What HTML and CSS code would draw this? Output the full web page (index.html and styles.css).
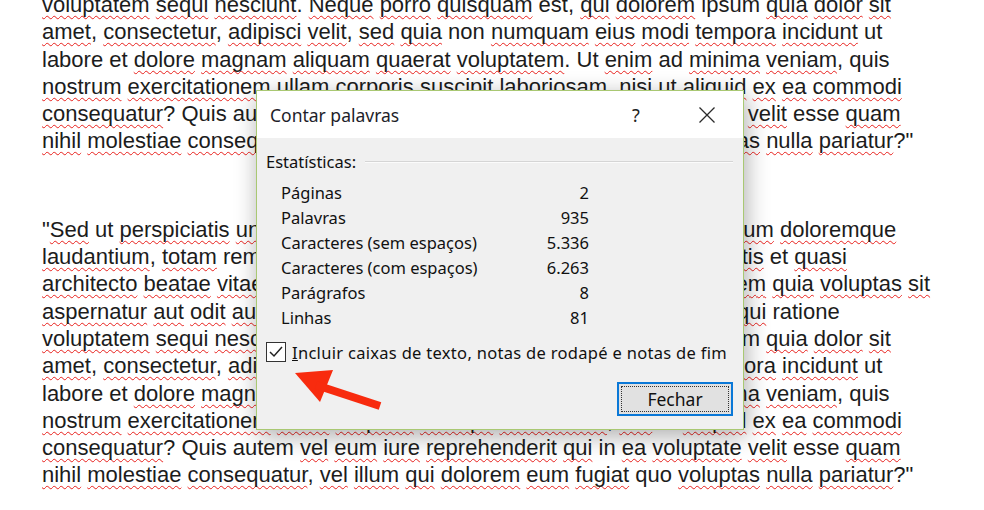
FILE: index.html
```html
<!DOCTYPE html>
<html lang="pt">
<head>
<meta charset="utf-8">
<title>Contar palavras</title>
<link rel="stylesheet" href="styles.css">
</head>
<body>
<div class="doc">
  <p class="para">
    <span class="ln"><span class="w">voluptatem</span> <span class="w">sequi</span> <span class="w">nesciunt</span>. <span class="w">Neque</span> <span class="w">porro</span> <span class="w">quisquam</span> est, <span class="w">qui</span> <span class="w">dolorem</span> ipsum <span class="w">quia</span> <span class="w">dolor</span> <span class="w">sit</span></span>
    <span class="ln"><span class="w">amet</span>, <span class="w">consectetur</span>, <span class="w">adipisci</span> <span class="w">velit</span>, <span class="w">sed</span> <span class="w">quia</span> non <span class="w">numquam</span> <span class="w">eius</span> <span class="w">modi</span> <span class="w">tempora</span> <span class="w">incidunt</span> ut</span>
    <span class="ln">labore et <span class="w">dolore</span> <span class="w">magnam</span> <span class="w">aliquam</span> <span class="w">quaerat</span> <span class="w">voluptatem</span>. Ut <span class="w">enim</span> ad <span class="w">minima</span> <span class="w">veniam</span>, quis</span>
    <span class="ln"><span class="w">nostrum</span> <span class="w">exercitationem</span> <span class="w">ullam</span> <span class="w">corporis</span> <span class="w">suscipit</span> <span class="w">laboriosam</span>, <span class="w">nisi</span> ut <span class="w">aliquid</span> <span class="w">ex</span> <span class="w">ea</span> <span class="w">commodi</span></span>
    <span class="ln"><span class="w">consequatur</span>? Quis autem <span class="w">vel</span> <span class="w">eum</span> <span class="w">iure</span> <span class="w">reprehenderit</span> <span class="w">qui</span> in <span class="w">ea</span> <span class="w">voluptate</span> <span class="w">velit</span> esse <span class="w">quam</span></span>
    <span class="ln"><span class="w">nihil</span> <span class="w">molestiae</span> <span class="w">consequatur</span>, <span class="w">vel</span> <span class="w">illum</span> <span class="w">qui</span> <span class="w">dolorem</span> <span class="w">eum</span> <span class="w">fugiat</span> quo <span class="w">voluptas</span> <span class="w">nulla</span> <span class="w">pariatur</span>?"</span>
  </p>
  <p class="para">
    <span class="ln">"<span class="w">Sed</span> ut <span class="w">perspiciatis</span> <span class="w">unde</span> <span class="w">omnis</span> <span class="w">iste</span> <span class="w">natus</span> error <span class="w">sit</span> <span class="w">voluptatem</span> <span class="w">accusantium</span> <span class="w">doloremque</span></span>
    <span class="ln"><span class="w">laudantium</span>, <span class="w">totam</span> rem <span class="w">aperiam</span>, <span class="w">eaque</span> <span class="w">ipsa</span> <span class="w">quae</span> ab <span class="w">illo</span> <span class="w">inventore</span> <span class="w">veritatis</span> et <span class="w">quasi</span></span>
    <span class="ln"><span class="w">architecto</span> <span class="w">beatae</span> <span class="w">vitae</span> <span class="w">dicta</span> <span class="w">sunt</span> <span class="w">explicabo</span>. <span class="w">Nemo</span> <span class="w">enim</span> <span class="w">ipsam</span> <span class="w">voluptatem</span> <span class="w">quia</span> <span class="w">voluptas</span> <span class="w">sit</span></span>
    <span class="ln"><span class="w">aspernatur</span> <span class="w">aut</span> <span class="w">odit</span> <span class="w">aut</span> <span class="w">fugit</span>, <span class="w">sed</span> <span class="w">quia</span> <span class="w">consequuntur</span> <span class="w">magni</span> <span class="w">dolores</span> <span class="w">eos</span> <span class="w">qui</span> ratione</span>
    <span class="ln"><span class="w">voluptatem</span> <span class="w">sequi</span> <span class="w">nesciunt</span>. <span class="w">Neque</span> <span class="w">porro</span> <span class="w">quisquam</span> est, <span class="w">qui</span> <span class="w">dolorem</span> ipsum <span class="w">quia</span> <span class="w">dolor</span> <span class="w">sit</span></span>
    <span class="ln"><span class="w">amet</span>, <span class="w">consectetur</span>, <span class="w">adipisci</span> <span class="w">velit</span>, <span class="w">sed</span> <span class="w">quia</span> non <span class="w">numquam</span> <span class="w">eius</span> <span class="w">modi</span> <span class="w">tempora</span> <span class="w">incidunt</span> ut</span>
    <span class="ln">labore et <span class="w">dolore</span> <span class="w">magnam</span> <span class="w">aliquam</span> <span class="w">quaerat</span> <span class="w">voluptatem</span>. Ut <span class="w">enim</span> ad <span class="w">minima</span> <span class="w">veniam</span>, quis</span>
    <span class="ln"><span class="w">nostrum</span> <span class="w">exercitationem</span> <span class="w">ullam</span> <span class="w">corporis</span> <span class="w">suscipit</span> <span class="w">laboriosam</span>, <span class="w">nisi</span> ut <span class="w">aliquid</span> <span class="w">ex</span> <span class="w">ea</span> <span class="w">commodi</span></span>
    <span class="ln"><span class="w">consequatur</span>? Quis autem <span class="w">vel</span> <span class="w">eum</span> <span class="w">iure</span> <span class="w">reprehenderit</span> <span class="w">qui</span> in <span class="w">ea</span> <span class="w">voluptate</span> <span class="w">velit</span> esse <span class="w">quam</span></span>
    <span class="ln"><span class="w">nihil</span> <span class="w">molestiae</span> <span class="w">consequatur</span>, <span class="w">vel</span> <span class="w">illum</span> <span class="w">qui</span> <span class="w">dolorem</span> <span class="w">eum</span> <span class="w">fugiat</span> quo <span class="w">voluptas</span> <span class="w">nulla</span> <span class="w">pariatur</span>?"</span>
  </p>
</div>

<div class="dialog">
  <div class="titlebar">
    <span class="title">Contar palavras</span>
    <span class="help">?</span>
    <span class="close">
      <svg width="18" height="18" viewBox="0 0 18 18"><path d="M1.5 1.5 L16.5 16.5 M16.5 1.5 L1.5 16.5" stroke="#2a2a2a" stroke-width="1.3" fill="none"/></svg>
    </span>
  </div>
  <div class="body">
    <div class="group-head">
      <span class="group-label">Estatísticas:</span>
      <span class="group-rule"></span>
    </div>
    <div class="stats">
      <span class="lbl">Páginas</span><span class="val">2</span>
      <span class="lbl">Palavras</span><span class="val">935</span>
      <span class="lbl">Caracteres (sem espaços)</span><span class="val">5.336</span>
      <span class="lbl">Caracteres (com espaços)</span><span class="val">6.263</span>
      <span class="lbl">Parágrafos</span><span class="val">8</span>
      <span class="lbl">Linhas</span><span class="val">81</span>
    </div>
    <div class="check-row">
      <span class="box">
        <svg width="18" height="18" viewBox="0 0 18 18"><path d="M3 9 L7 13 L15 4" stroke="#222" stroke-width="1.5" fill="none"/></svg>
      </span>
      <span class="check-text"><span class="ak">I</span>ncluir caixas de texto, notas de rodapé e notas de fim</span>
    </div>
    <div class="btn-row">
      <span class="btn"><span class="btn-focus">Fechar</span></span>
    </div>
  </div>
</div>

<svg class="arrow" width="100" height="52" viewBox="0 0 100 52">
  <polygon points="5,8 43,5 30,37" fill="#f82b0e"/>
  <line x1="26" y1="20" x2="90" y2="41" stroke="#f82b0e" stroke-width="8"/>
</svg>
</body>
</html>
```

FILE: styles.css
```css
html, body {
  margin: 0;
  padding: 0;
  background: #ffffff;
}
body {
  width: 984px;
  height: 510px;
  overflow: hidden;
  position: relative;
}
.doc {
  padding-left: 42px;
  margin-top: -9px;
  font-family: "Liberation Sans", Arial, sans-serif;
  font-size: 22px;
  color: #1c1c1c;
}
.para {
  margin: 0 0 61px 0;
}
.ln {
  display: block;
  white-space: nowrap;
  line-height: 27.3px;
}
.w {
  text-decoration-line: underline;
  text-decoration-style: wavy;
  text-decoration-color: #e8201c;
  text-decoration-thickness: 1px;
  text-underline-offset: 3px;
  text-decoration-skip-ink: none;
}

.dialog {
  position: absolute;
  left: 256px;
  top: 90px;
  width: 488px;
  height: 340px;
  box-sizing: border-box;
  border: 1px solid #a9c873;
  background: #f0f0f0;
  box-shadow: 2px 6px 22px rgba(0, 0, 0, 0.32);
  font-family: "Noto Sans", "Open Sans", sans-serif;
  font-size: 16.5px;
  color: #111;
  display: flex;
  flex-direction: column;
}
.titlebar {
  height: 47px;
  background: #ffffff;
  display: flex;
  align-items: center;
  padding-left: 13px;
}
.title {
  flex: 1;
  font-size: 17.5px;
  color: #1e1e2a;
  padding-top: 1px;
}
.help {
  width: 20px;
  text-align: center;
  font-size: 18px;
  color: #222;
  margin-right: 52px;
}
.close {
  display: flex;
  width: 18px;
  height: 18px;
  margin-right: 27px;
}
.body {
  flex: 1;
  padding: 0 10px 0 9px;
  display: flex;
  flex-direction: column;
}
.group-head {
  margin-top: 14px;
  height: 20px;
  display: flex;
  align-items: center;
  gap: 9px;
}
.group-label {
  line-height: 20px;
}
.group-rule {
  flex: 1;
  height: 0;
  border-top: 1px solid #d5d5d5;
  border-bottom: 1px solid #fbfbfb;
}
.stats {
  margin: 8px 0 0 15px;
  width: 308px;
  display: grid;
  grid-template-columns: 1fr auto;
  grid-auto-rows: 25px;
  align-items: center;
}
.val {
  text-align: right;
}
.check-row {
  margin-top: 11px;
  height: 22px;
  display: flex;
  align-items: center;
  gap: 6px;
}
.check-text {
  letter-spacing: 0.3px;
  white-space: nowrap;
}
.box {
  width: 20px;
  height: 20px;
  box-sizing: border-box;
  border: 1px solid #333;
  background: #fff;
  display: flex;
  align-items: center;
  justify-content: center;
}
.ak {
  text-decoration: underline;
}
.btn-row {
  margin-top: 19px;
  display: flex;
  justify-content: flex-end;
}
.btn {
  width: 116px;
  height: 34px;
  box-sizing: border-box;
  border: 2px solid #0a78d7;
  background: #e1e1e1;
  padding: 2px;
  display: flex;
}
.btn-focus {
  flex: 1;
  border: 1px dotted #333;
  display: flex;
  align-items: center;
  justify-content: center;
  font-size: 17.5px;
}
.arrow {
  position: absolute;
  left: 290px;
  top: 365px;
}
```
